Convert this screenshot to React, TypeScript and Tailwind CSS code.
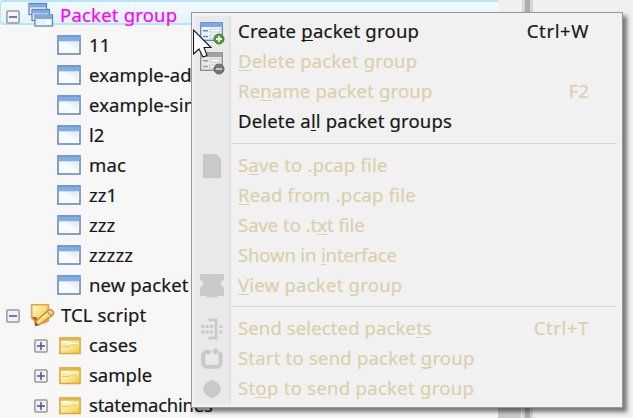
import type { ReactNode } from "react";

const font = "font-['Noto_Sans','Open_Sans',sans-serif]";

function PacketIcon() {
  return (
    <svg width="24" height="20" viewBox="0 0 24 20" className="-mt-px shrink-0">
      <defs>
        <linearGradient id="pane" x1="1" y1="0" x2="0" y2="1">
          <stop offset="0" stopColor="#dfe6f4" />
          <stop offset="0.5" stopColor="#fafcff" />
          <stop offset="1" stopColor="#f4f8fd" />
        </linearGradient>
      </defs>
      <rect x="1" y="1" width="22" height="18" fill="#fff" stroke="#6689c0" strokeWidth="1.6" />
      <rect x="3" y="7" width="18" height="10.5" fill="url(#pane)" />
      <rect x="1.6" y="1.6" width="20.8" height="4.8" fill="#82ade2" />
      <rect x="0.5" y="0.5" width="23" height="1.2" fill="#6c95d0" />
    </svg>
  );
}

function GroupIcon() {
  return (
    <svg width="26" height="26" viewBox="0 0 26 26" className="shrink-0">
      {[
        [1, 1.5],
        [4, 7.5],
        [7, 13],
      ].map(([x, y]) => (
        <g key={x}>
          <rect x={x} y={y} width="17.5" height="11" fill="#eaf4fd" stroke="#5f84bd" strokeWidth="1.3" />
          <rect x={x + 0.5} y={y + 0.5} width="16.5" height="3.5" fill="#80a9de" />
        </g>
      ))}
      <rect x="18" y="19" width="4" height="3" fill="#fff" />
    </svg>
  );
}

function FolderIcon() {
  return (
    <svg width="22" height="18" viewBox="0 0 22 18" className="mt-px shrink-0">
      <defs>
        <linearGradient id="fold" x1="0" y1="0" x2="1" y2="1">
          <stop offset="0" stopColor="#fdf6c5" />
          <stop offset="0.5" stopColor="#fbea9c" />
          <stop offset="1" stopColor="#f0c83a" />
        </linearGradient>
      </defs>
      <rect x="0.9" y="0.9" width="20.2" height="15.6" fill="url(#fold)" stroke="#e0a63c" strokeWidth="1.5" />
      <rect x="1" y="1" width="20" height="2.6" fill="#e3b63e" />
      <path d="M2.5 4.8H9L11 7H19.5" fill="none" stroke="#fffdf0" strokeWidth="1.8" />
      <path d="M3 9.5H10L12 7.8H19" fill="none" stroke="#e9c766" strokeWidth="1" />
    </svg>
  );
}

function ScriptIcon() {
  return (
    <svg width="25" height="24" viewBox="0 0 25 24" className="shrink-0">
      <defs>
        <linearGradient id="page" x1="0" y1="0" x2="1" y2="1">
          <stop offset="0" stopColor="#fffbe2" />
          <stop offset="0.6" stopColor="#fad767" />
          <stop offset="1" stopColor="#f5bd38" />
        </linearGradient>
      </defs>
      <path d="M1.7 1.7H18.3V18L14 20H7L1.7 15Z" fill="url(#page)" stroke="#e7a04c" strokeWidth="1.6" />
      <path d="M1.5 14H7V20Z" fill="#b66b32" />
      <path d="M5 19L18 7.5Q20 5.5 22.5 7.8T22.3 12.5L9 22L5.5 22.5Z" fill="#f7ce64" stroke="#c78b35" strokeWidth="1.3" />
      <path d="M8 19L20 9" stroke="#fff0a5" strokeWidth="2" />
      <path d="M17 8.5L21.5 13" stroke="#a9a68e" strokeWidth="1.6" />
      <path d="M5 18.8L9 22L5.3 23Z" fill="#8a532b" />
    </svg>
  );
}

function Toggle({ open }: { open?: boolean }) {
  return (
    <svg width="14" height="14" viewBox="0 0 14 14" className="-ml-px mr-px mt-px shrink-0">
      <rect x="0.9" y="0.9" width="12.2" height="12.2" rx="1" fill="#f3f3f3" stroke="#999" strokeWidth="1.5" />
      <path d={open ? "M3 7H11" : "M3 7H11M7 3V11"} stroke="#42569d" strokeWidth="1.5" />
    </svg>
  );
}

function FormIcon({ add }: { add?: boolean }) {
  const line = add ? "#668bc4" : "#909090";
  return (
    <svg width="26" height="24" viewBox="0 0 26 24" className="mt-[3px]">
      <rect x="1.7" y="1.7" width="21.6" height="17.6" fill={add ? "#f2f7fd" : "#e9e9e9"} stroke={line} strokeWidth="1.4" />
      <rect x="1.5" y="1.5" width="22" height="4.5" fill={add ? "#7ba8e0" : "#a1a1a1"} />
      <path d="M4 9.7H9M4 15.5H9" stroke={add ? "#6589bd" : "#999"} strokeWidth="1.6" />
      <path d="M11 8H21V11H11ZM11 14H18V17H11Z" fill="#fff" stroke={add ? "#bccbdd" : "#c4c4c4"} />
      <circle cx="20" cy="18" r="5" fill={add ? "#579a34" : "#777"} stroke={add ? "#407d25" : "#636363"} />
      <path d={add ? "M17 18H23M20 15V21" : "M17 18H23"} stroke={add ? "#f5fff0" : "#cfcfcf"} strokeWidth="1.8" />
    </svg>
  );
}

const gray = "#c9c9c9";
const icons: Record<string, ReactNode> = {
  add: <FormIcon add />,
  remove: <FormIcon />,
  file: (
    <svg width="26" height="26" viewBox="0 0 26 26">
      <path d="M4 2H17L22 7V26H4Z" fill={gray} />
    </svg>
  ),
  view: (
    <svg width="26" height="26" viewBox="0 0 26 26">
      <path d="M1 2H25V7L22 10V13L25 16V24H20L17 25.5H9L6 24H1V16L4 13V10L1 7Z" fill={gray} />
    </svg>
  ),
  send: (
    <svg width="26" height="26" viewBox="0 0 26 26" className="mt-[2px]">
      <path d="M9.5 3.8H17V22.2H9.5" fill="none" stroke={gray} strokeWidth="2.8" />
      <path d="M2.5 10.5H15M2.5 16H15M20.5 10.5H24M20.5 16H24" stroke={gray} strokeWidth="3" strokeDasharray="3 1.2" />
    </svg>
  ),
  start: (
    <svg width="26" height="26" viewBox="0 0 26 26" className="mt-px">
      <path d="M11.5 6H6.5L4.2 8.5V18L6.8 20.8H19L21.6 18V8.5L20 6.5" fill="none" stroke={gray} strokeWidth="4" />
      <path d="M13 5.5L16.5 2L20 5.5L16.5 9Z" fill={gray} />
    </svg>
  ),
  stop: (
    <svg width="26" height="26" viewBox="0 0 26 26" className="mt-[2px]">
      <path d="M10.5 5L13 3.5L15.5 5L19 7L22 12V14L19.5 18.5L16 21L13 22.5L10 21L6.5 18.5L4 14V12L7 7Z" fill={gray} />
    </svg>
  ),
};

type Item = { icon?: string; before: string; key: string; after: string; shortcut?: string; on?: boolean; track: string };

const sections: Item[][] = [
  [
    { icon: "add", before: "Create ", key: "p", after: "acket group", shortcut: "Ctrl+W", on: true, track: "tracking-[0.23px]" },
    { icon: "remove", before: "", key: "D", after: "elete packet group", track: "tracking-[0.16px]" },
    { before: "Re", key: "n", after: "ame packet group", shortcut: "F2", track: "tracking-[0.16px]" },
    { before: "Delete a", key: "l", after: "l packet groups", on: true, track: "tracking-[0.18px]" },
  ],
  [
    { icon: "file", before: "S", key: "a", after: "ve to .pcap file", track: "tracking-[0.2px]" },
    { before: "", key: "R", after: "ead from .pcap file", track: "tracking-[0.22px]" },
    { before: "Save to .t", key: "x", after: "t file", track: "tracking-[-0.03px]" },
    { before: "Shown in ", key: "i", after: "nterface", track: "tracking-[-0.14px]" },
    { icon: "view", before: "", key: "V", after: "iew packet group", track: "tracking-[0.24px]" },
  ],
  [
    { icon: "send", before: "Send selected packe", key: "t", after: "s", shortcut: "Ctrl+T", track: "tracking-[0.12px]" },
    { icon: "start", before: "Start to send packet ", key: "g", after: "roup", track: "tracking-[0.21px]" },
    { icon: "stop", before: "St", key: "o", after: "p to send packet group", track: "tracking-[0.29px]" },
  ],
];

function MenuRow({ item }: { item: Item }) {
  return (
    <div className={`flex h-[30px] items-center ${item.on ? "text-[#181818]" : "text-[#dbd0aa]"}`}>
      <div className="ml-[2px] flex w-[37px] shrink-0 justify-center pr-[2px]">{item.icon && icons[item.icon]}</div>
      <div className={`ml-[7px] flex-1 whitespace-pre leading-[30px] ${item.track}`}>
        {item.before}
        <span className="underline decoration-1 underline-offset-2 [text-decoration-skip-ink:none]">{item.key}</span>
        {item.after}
      </div>
      <div className={`pr-[33px] ${item.shortcut === "F2" ? "" : "tracking-[0.6px]"}`}>{item.shortcut}</div>
    </div>
  );
}

function ContextMenu() {
  return (
    <div className="absolute left-[191px] top-[12px] h-[396px] w-[432px] border border-[#999] bg-[#f1f1f1] pt-[3px] shadow-[4px_4px_4px_rgba(0,0,0,0.5)]">
      <div className="absolute bottom-[3px] left-[3px] top-[3px] w-[36px] border-r-2 border-[#e0e0e0] bg-[#e9e9e9]" />
      <div className="relative">
        {sections.map((items, i) => (
          <div key={i}>
            {i > 0 && (
              <div className={`flex items-center pl-[40px] pr-[5px] ${i === 1 ? "h-[14px]" : "h-[13px]"}`}>
                <div className="h-px w-full bg-[#dadada]" />
              </div>
            )}
            {items.map((item) => (
              <MenuRow key={item.before + item.key + item.after} item={item} />
            ))}
          </div>
        ))}
      </div>
    </div>
  );
}

const packets = ["11", "example-ad", "example-sim", "l2", "mac", "zz1", "zzz", "zzzzz", "new packet"];
const folders = [
  { name: "cases", track: "tracking-[0.2px]" },
  { name: "sample", track: "tracking-normal" },
  { name: "statemachines", track: "tracking-[-0.22px]" },
];

export default function App() {
  return (
    <div
      className={`relative flex h-[418px] w-[633px] overflow-hidden bg-[#f0f0f0] text-[18.5px] text-[#181818] [-webkit-text-stroke:0.2px] ${font}`}
    >
      <div className="h-full w-[498px] shrink-0 bg-[#f7f7f7]">
        <div className="h-[30px]">
          <div className="flex h-[25px] items-center rounded-l-sm border-y-2 border-l border-[#b5e4fb] bg-gradient-to-b from-[#f3faff] to-[#e2f3fe] pl-[6px]">
            <div className="mt-[7px]">
              <Toggle open />
            </div>
            <div className="ml-[7px] mt-[5px]">
              <GroupIcon />
            </div>
            <span className="ml-[6px] mt-[5px] leading-[30px] tracking-[0.2px] text-[#ff00ff]">Packet group</span>
          </div>
        </div>
        {packets.map((name) => (
          <div key={name} className="flex h-[30px] items-center whitespace-nowrap pl-[57px] tracking-[0.1px]">
            <PacketIcon />
            <span className="ml-[8px]">{name}</span>
          </div>
        ))}
        <div className="flex h-[30px] items-center pl-[7px]">
          <Toggle open />
          <div className="ml-[9px]">
            <ScriptIcon />
          </div>
          <span className="ml-[6px] tracking-[0.1px]">TCL script</span>
        </div>
        {folders.map(({ name, track }) => (
          <div key={name} className="flex h-[30px] items-center pl-[35px]">
            <Toggle />
            <div className="ml-[10px]">
              <FolderIcon />
            </div>
            <span className={`ml-[8px] ${track}`}>{name}</span>
          </div>
        ))}
      </div>
      <div className="flex w-[24px] shrink-0 items-end">
        <div className="h-[20px] w-[23px] bg-[#cbcbcb]" />
      </div>
      <div className="w-[11px] shrink-0 border-x-[3px] border-[#d5d5d5] bg-[#adadad]" />
      <ContextMenu />
      <svg width="20" height="30" viewBox="0 0 20 30" className="absolute left-[193px] top-[29px]">
        <path d="M0.5 1V25L6 20L10 28L14 26.5L11 18.5H18Z" fill="#fff" stroke="#171721" strokeWidth="1.1" />
      </svg>
    </div>
  );
}
